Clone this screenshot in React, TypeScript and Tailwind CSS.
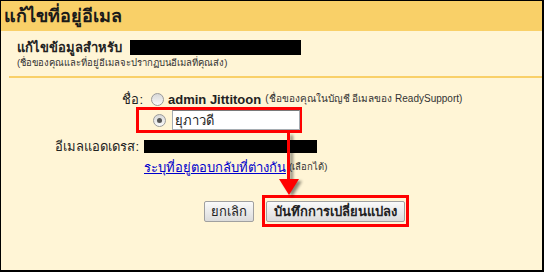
import React, { useState } from 'react'

export default function App() {
    const [choice, setChoice] = useState<'account' | 'custom'>('custom')
    const [name, setName] = useState('ยุภาวดี')

    return (
        <div
            className="relative w-[544px] h-[272px] bg-[#fff5d6] border-t border-l border-r-2 border-b-2 border-black overflow-hidden text-[#222]"
            style={{ fontFamily: '"Liberation Sans", Tahoma, "DejaVu Sans", sans-serif' }}
        >
            {/* Header */}
            <div className="h-[30px] bg-[#f9d068] flex items-center pl-[3px]">
                <h1 className="text-[18px] font-bold text-[#1a1a1a] leading-none">แก้ไขที่อยู่อีเมล</h1>
            </div>

            {/* Intro */}
            <div className="pl-[16px] pt-[9px]">
                <div className="flex items-center h-[15px] gap-[8px]">
                    <span className="text-[13px] font-bold leading-none">แก้ไขข้อมูลสำหรับ</span>
                    <span className="w-[171px] h-[15px] bg-black" />
                </div>
                <p className="text-[9.5px] leading-[13px] text-[#333] mt-[1px]">(ชื่อของคุณและที่อยู่อีเมลจะปรากฏบนอีเมลที่คุณส่ง)</p>
            </div>
            <div className="ml-[8px] mt-[7px] h-[2px] bg-[#f9d068]" />

            {/* Form */}
            <div className="mt-[13px] text-[13px] leading-none">
                <div className="flex items-center h-[16px]">
                    <span className="w-[144px] text-right pr-[2px]">ชื่อ:</span>
                    <span className="ml-[6px]">
                        <Radio checked={choice === 'account'} onClick={() => setChoice('account')} />
                    </span>
                    <span className="ml-[4px] font-bold">admin Jittitoon</span>
                    <span className="ml-[4px] text-[10px] text-[#333]">(ชื่อของคุณในบัญชี อีเมลของ ReadySupport)</span>
                </div>

                <div className="flex">
                    <span className="w-[135px]" />
                    <div className="w-[166px] h-[26px] border-[3px] border-[#ff0000] flex items-center">
                        <span className="ml-[14px]">
                            <Radio checked={choice === 'custom'} onClick={() => setChoice('custom')} />
                        </span>
                        <input
                            value={name}
                            onChange={(e) => setName(e.target.value)}
                            className="ml-[6px] w-[128px] h-[20px] bg-white border border-[#a5acb2] border-t-[#7a7a7a] px-[2px] text-[13px] outline-none"
                        />
                    </div>
                </div>

                <div className="flex items-center mt-[6px] h-[14px]">
                    <span className="w-[143px] text-right pr-[5px]">อีเมลแอดเดรส:</span>
                    <span className="w-[173px] h-[13px] bg-black" />
                </div>
                <div className="flex items-center mt-[7px] h-[14px] pl-[143px]">
                    <a href="#" className="text-[#0000cc] underline">ระบุที่อยู่ตอบกลับที่ต่างกัน</a>
                    <span className="ml-[3px] text-[9.5px] text-[#333]">(เลือกได้)</span>
                </div>
            </div>

            {/* Buttons */}
            <div className="flex items-center mt-[21px] pl-[203px]">
                <button className="h-[21px] px-[6px] text-[13px] leading-none border border-[#a0a0a0] rounded-[2px] bg-gradient-to-b from-[#fafafa] to-[#dcdcdc]">
                    ยกเลิก
                </button>
                <div className="ml-[8px] border-[3px] border-[#ff0000] p-[1px]">
                    <button className="h-[21px] px-[7px] text-[13px] leading-none font-bold border border-[#a0a0a0] rounded-[2px] bg-gradient-to-b from-[#fafafa] to-[#dcdcdc]">
                        บันทึกการเปลี่ยนแปลง
                    </button>
                </div>
            </div>

            {/* Arrow overlay */}
            <svg className="absolute left-[276px] top-[132px] pointer-events-none" width="28" height="70" viewBox="0 0 28 70">
                <defs>
                    <filter id="sh" x="-50%" y="-20%" width="200%" height="150%">
                        <feGaussianBlur stdDeviation="1.5" />
                    </filter>
                </defs>
                <g opacity="0.45" filter="url(#sh)" transform="translate(3,2)">
                    <rect x="10" y="0" width="3" height="48" fill="#000" />
                    <polygon points="2,46 22,46 12,62" fill="#000" />
                </g>
                <rect x="10" y="0" width="3" height="48" fill="#ff0000" />
                <polygon points="2,46 22,46 12,62" fill="#ff0000" />
            </svg>
        </div>
    )
}

function Radio({ checked, onClick }: { checked: boolean; onClick: () => void }) {
    return (
        <span
            onClick={onClick}
            className="w-[13px] h-[13px] rounded-full border border-[#9a9a9a] bg-gradient-to-b from-[#d8d8d8] to-[#fafafa] flex items-center justify-center cursor-pointer"
        >
            {checked && <span className="w-[5px] h-[5px] rounded-full bg-[#555]" />}
        </span>
    )
}
